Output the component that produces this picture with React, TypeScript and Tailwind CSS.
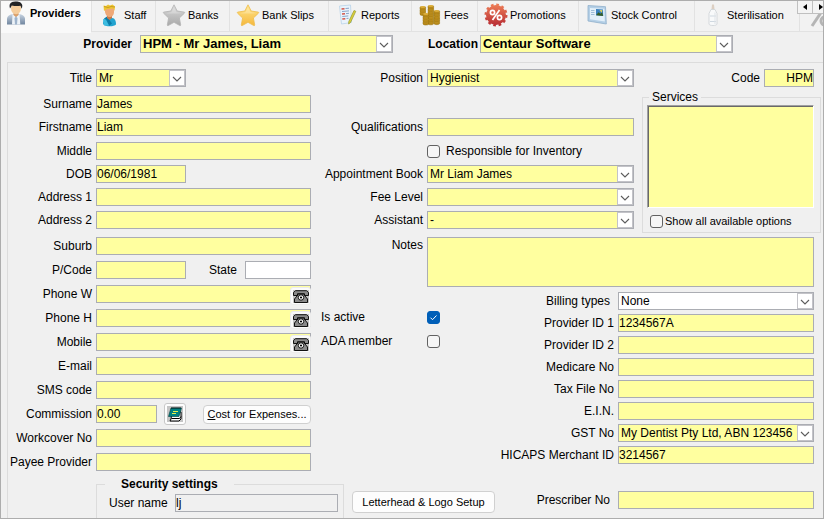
import React, { useState } from 'react';

const FIELD = 'block h-[18px] min-w-0 rounded-none border border-[#abadb3] px-0 text-xs text-black outline-none';
const YELLOW = 'bg-[#ffff9f]';

interface TextFieldProps {
  id: string;
  label: string;
  labelClass: string;
  value?: string;
  inputClass?: string;
  children?: React.ReactNode;
}

const TextField: React.FC<TextFieldProps> = ({ id, label, labelClass, value = '', inputClass = 'flex-1', children }) => (
  <div className="relative flex h-[18px] items-center gap-1">
    <label htmlFor={id} className={`shrink-0 whitespace-nowrap text-right ${labelClass}`}>{label}</label>
    <input id={id} type="text" defaultValue={value} className={`${FIELD} ${YELLOW} ${inputClass}`} />
    {children}
  </div>
);

interface ComboProps {
  id: string;
  options: string[];
  className?: string;
  selectClass?: string;
}

const Combo: React.FC<ComboProps> = ({ id, options, className = 'flex-1', selectClass = 'bg-[#ffff9f] text-xs' }) => (
  <div className={`relative h-[18px] min-w-0 ${className}`}>
    <select
      id={id}
      className={`block h-[18px] w-full appearance-none rounded-none border border-[#abadb3] pl-0.5 pr-4 leading-4 text-black outline-none ${selectClass}`}
    >
      {options.map((o) => <option key={o}>{o}</option>)}
    </select>
    <span className="pointer-events-none absolute right-px top-px flex h-4 w-4 items-center justify-center border border-[#c3c3c8] bg-white pt-0.5">
      <svg width="10" height="6" viewBox="0 0 10 6" fill="none" stroke="#5c5c5c" strokeWidth="1.1">
        <path d="M1 1l4 4 4-4" />
      </svg>
    </span>
  </div>
);

interface ComboFieldProps extends ComboProps {
  label: string;
  labelClass: string;
}

const ComboField: React.FC<ComboFieldProps> = ({ label, labelClass, ...combo }) => (
  <div className="flex h-[18px] items-center gap-1">
    <label htmlFor={combo.id} className={`shrink-0 whitespace-nowrap text-right ${labelClass}`}>{label}</label>
    <Combo {...combo} />
  </div>
);

const Tick: React.FC<{ id: string; checked?: boolean }> = ({ id, checked = false }) => (
  <span className="relative h-[13px] w-[13px] shrink-0">
    <input
      id={id}
      type="checkbox"
      defaultChecked={checked}
      className="peer block h-[13px] w-[13px] appearance-none rounded-[3px] border border-[#626262] bg-[#f6f6f6] checked:border-[#005fb8] checked:bg-[#005fb8]"
    />
    <svg viewBox="0 0 13 13" className="pointer-events-none absolute inset-0 hidden peer-checked:block" fill="none" stroke="#fff">
      <path d="M3.5 6.7l2 2 4-4.2" />
    </svg>
  </span>
);

const PhoneButton: React.FC<{ label: string }> = ({ label }) => (
  <button
    type="button"
    aria-label={label}
    className="absolute right-0 top-0.5 flex h-[18px] w-[21px] items-center justify-center rounded-[3px] border border-[#ececec] bg-[#fbfbfb]"
  >
    <svg width="16" height="13" viewBox="0 0 16 13">
      <rect width="16" height="13" fill="#c4c4c4" />
      <path d="M4.500 4h7l.5 2 2.500 3v3.500h-13V9L4 6z" fill="#8a8a8a" stroke="#000" strokeWidth=".9" />
      <path d="M.5 5.500v-3L2.500.700h11l2 1.800v3h-4V3.700h-7v1.800z" fill="#8a8a8a" stroke="#000" strokeWidth=".9" />
      <circle cx="8" cy="7.500" r="2.700" fill="#fff" stroke="#000" strokeWidth=".9" />
      <circle cx="8" cy="7.500" r="1.100" fill="#000" />
    </svg>
  </button>
);

const PersonIcon = () => (
  <svg width="20" height="24" viewBox="0 0 20 24">
    <defs>
      <linearGradient id="coat" x1="0" x2="0" y1="0" y2="1">
        <stop offset="0" stopColor="#c8d4e2" />
        <stop offset="1" stopColor="#71869f" />
      </linearGradient>
    </defs>
    <path d="M1 23.500V18c0-3 3-4.500 6-5h6c3 .5 6 2 6 5v5.500z" fill="url(#coat)" />
    <path d="M6.500 13L10 16l3.500-3 .8 10.500H6z" fill="#eef3f8" />
    <path d="M10 15.500l1.500 1.500-.5 6.500H9L8.500 17z" fill="#9fb4cc" />
    <path d="M7.500 10h5v4L10 16l-2.500-2z" fill="#dda069" />
    <ellipse cx="10" cy="7.500" rx="5" ry="5.800" fill="#f5cd9c" />
    <path d="M4 7.500C2.500 3 5 .8 8 .8c1.500-.8 8-.8 8.300 3.700.1 1.200-.3 2.300-.6 3.200-.6-1-.7-2-1.200-3-2.500.5-5.500.6-8.700-.2-.7 1-.9 2-1.800 3z" fill="#222326" />
  </svg>
);

const StaffIcon = () => (
  <svg width="15" height="23" viewBox="0 0 15 23">
    <path d="M1 20c0-4 2-6 5-6h4c3 0 4 3 4 6.500C12 23 3 23 1 20z" fill="#22a3cf" />
    <path d="M2 14.500l3-2 5 7-3 2.500z" fill="#0c7daa" />
    <path d="M1 15l3 .5 3 6H2z" fill="#3dbce0" />
    <path d="M5 10h5v4l-2.500 2L5 14z" fill="#c9794a" />
    <path d="M3 4h9v4c0 2.500-1.500 5-4.300 5S3.500 10.500 3 8z" fill="#efa877" />
    <path d="M2 7L1.500 1.500 4 2l2-1.500L8 1.500 10.500.5 13 2.500 12.500 7l-1-2.500L5 5z" fill="#eec531" />
    <path d="M2 2.500l4 1 3-1 4 .5" stroke="#b88d15" fill="none" strokeWidth=".7" />
  </svg>
);

const StarIcon: React.FC<{ from: string; to: string; edge: string; id: string }> = ({ from, to, edge, id }) => (
  <svg width="24" height="24" viewBox="0 0 24 24" className="shrink-0">
    <defs>
      <linearGradient id={id} x1="0" x2="0" y1="0" y2="1">
        <stop offset="0" stopColor={from} />
        <stop offset="1" stopColor={to} />
      </linearGradient>
    </defs>
    <path
      d="M12 1.800l3.200 6.200 7 1.100c.6.100.6.700.2 1.100l-5 4.800 1.300 6.900c.1.600-.4.900-.9.700L12 19.300l-5.800 3.300c-.5.200-1-.1-.9-.7L6.600 15l-5-4.800c-.4-.4-.4-1 .2-1.100l7-1.100z"
      fill={`url(#${id})`}
      stroke={edge}
      strokeWidth=".8"
      strokeLinejoin="round"
    />
    <path d="M12 4l2.500 5 5.500 1c-3 .5-11 1-16 .2L9.500 9z" fill="#fff" opacity=".25" />
  </svg>
);

const ReportIcon = () => (
  <svg width="20" height="22" viewBox="0 0 20 22">
    <path d="M2.500 2l11-1 1 17.500-10 1.500z" fill="#eaf3fb" stroke="#b9d3e9" strokeWidth=".8" />
    <path d="M4.500 5l3-.3M5 10l3-.3M5.300 15l3-.3" stroke="#d4574a" strokeWidth="1.600" />
    <path d="M8.500 4.500l3.500-.3M5 7.500l7-.6M9 9.600l3-.3M5.300 12.500l6-.6M9.500 14.500l2-.2" stroke="#8aa5c9" strokeWidth="1" />
    <path d="M17 6.500l1.800.8-5.300 11.200-1.900 1.500.2-2.500z" fill="#dfcf38" stroke="#8f9a34" strokeWidth=".7" />
  </svg>
);

const COIN_STACKS = [
  { x: 1, y: 3, n: 3 },
  { x: 9, y: 2, n: 7 },
  { x: 15, y: 7, n: 5 },
  { x: 4, y: 10, n: 4 },
];

const CoinsIcon = () => (
  <svg width="22" height="22" viewBox="0 0 22 22">
    {COIN_STACKS.map((s) =>
      Array.from({ length: s.n }, (_, i) => s.n - 1 - i).map((i) => (
        <g key={`${s.x}-${i}`}>
          <path
            d={`M${s.x} ${s.y + i * 2.600}v2.200c0 1.400 5.600 1.400 5.600 0v-2.200z`}
            fill="#b98a1a"
            stroke="#94700f"
            strokeWidth=".5"
          />
          <ellipse cx={s.x + 2.800} cy={s.y + i * 2.600} rx="2.800" ry="1.100" fill="#dcae3a" />
        </g>
      ))
    )}
  </svg>
);

const PromoIcon = () => (
  <svg width="24" height="24" viewBox="0 0 24 24" className="shrink-0">
    <defs>
      <linearGradient id="promo" x1="0" x2="0" y1="0" y2="1">
        <stop offset="0" stopColor="#eb7a55" />
        <stop offset="1" stopColor="#b92f35" />
      </linearGradient>
    </defs>
    <circle cx="12" cy="12" r="10" fill="url(#promo)" />
    <circle cx="12" cy="12" r="10" fill="none" stroke="url(#promo)" strokeWidth="3" strokeDasharray="2.600 2.630" />
    <g fill="none" stroke="#fff" strokeWidth="1.700">
      <circle cx="8.500" cy="9.500" r="2.100" />
      <circle cx="15.500" cy="14.500" r="2.100" />
      <path d="M15.500 7l-7 10" />
    </g>
  </svg>
);

const StockIcon = () => (
  <svg width="20" height="22" viewBox="0 0 20 22">
    <path d="M1 1.500l17.500 1.200.8 17.300L1 17z" fill="#b4cfe6" stroke="#91b0cc" strokeWidth=".8" />
    <path d="M3 4l14.300.8.500 12.800L3 15.200z" fill="#e3f0fa" />
    <path d="M9 5l7 .5.200 6.500L9 11.300z" fill="#3c81bd" />
    <path d="M9 11.300l2.500-3 2 1.500 1.500-1.500 1.200 3.700z" fill="#365e27" />
    <path d="M12.500 6l3 .2-1 2.500z" fill="#e9d657" />
    <path d="M4 6.500h3.500M4 8.500h3.500M4 10.500h3.500" stroke="#9fbdd8" />
  </svg>
);

const BottleIcon = () => (
  <svg width="10" height="24" viewBox="0 0 10 24">
    <path d="M4 1.500h2l.5 5h-3z" fill="#dccfc2" />
    <path d="M3 6.500h4l2 4V21c0 2-8 2-8 0V10.500z" fill="#f8f9fa" stroke="#cdd2d6" strokeWidth=".8" />
    <path d="M2 13h6M2 18.500h6" stroke="#cfd8e0" />
    <path d="M7 9.500V21" stroke="#dfe3e7" />
  </svg>
);

const TABS = [
  { name: 'Staff', width: 'w-16', icon: <StaffIcon /> },
  { name: 'Banks', width: 'w-[74px]', icon: <StarIcon id="silver" from="#dadada" to="#a9a9a9" edge="#b4b4b4" /> },
  { name: 'Bank Slips', width: 'w-[99px]', icon: <StarIcon id="gold" from="#ffe58a" to="#f5b83d" edge="#eebc4d" /> },
  { name: 'Reports', width: 'w-[83px]', icon: <ReportIcon /> },
  { name: 'Fees', width: 'w-[66px]', icon: <CoinsIcon /> },
  { name: 'Promotions', width: 'w-[101px]', icon: <PromoIcon /> },
  { name: 'Stock Control', width: 'w-[116px]', icon: <StockIcon /> },
  { name: 'Sterilisation', width: 'w-[105px]', icon: <BottleIcon /> },
];

const TabBar: React.FC = () => {
  const [active, setActive] = useState('Providers');
  return (
    <div className="relative flex h-8 overflow-hidden text-[11px]" role="tablist">
      <button
        type="button"
        role="tab"
        aria-selected={active === 'Providers'}
        onClick={() => setActive('Providers')}
        className="flex w-[90px] shrink-0 items-center gap-1 bg-[#f9f9f9] pb-2 pl-[5px] font-bold"
      >
        <PersonIcon />
        Providers
      </button>
      {TABS.map((t) => (
        <button
          key={t.name}
          type="button"
          role="tab"
          aria-selected={active === t.name}
          onClick={() => setActive(t.name)}
          className={`flex h-[31px] shrink-0 items-center whitespace-nowrap border-b border-l border-[#e2e2e2] bg-[#f2f2f2] pb-0.5 pl-1.5 ${t.width}`}
        >
          <span className="flex w-[26px] justify-center pr-[3px]">{t.icon}</span>
          {t.name}
        </button>
      ))}
      <button type="button" role="tab" aria-label="More" className="flex h-[31px] min-w-0 flex-1 items-end overflow-hidden border-b border-l border-[#e2e2e2] bg-[#f2f2f2] pb-1 pl-2.5">
        <svg width="20" height="18" viewBox="0 0 20 18" className="shrink-0" fill="none" stroke="#b5b5b5" strokeWidth="3">
          <path d="M2 17L12 2" />
          <circle cx="15" cy="12" r="4" />
        </svg>
      </button>
      <div className="absolute right-0 top-0 flex h-[13px] w-[26px] overflow-hidden">
        <button type="button" aria-label="Scroll left" className="flex w-4 shrink-0 items-center justify-center border border-t-0 border-[#c0c0c0] bg-[#f4f4f4]">
          <svg width="4" height="6" viewBox="0 0 4 6"><path d="M4 0v6L0 3z" /></svg>
        </button>
        <button type="button" aria-label="Scroll right" className="flex w-4 shrink-0 items-center border-b border-[#c0c0c0] bg-[#f4f4f4] pl-1.5">
          <svg width="4" height="6" viewBox="0 0 4 6"><path d="M0 0v6l4-3z" /></svg>
        </button>
      </div>
    </div>
  );
};

const PersonalDetails: React.FC = () => {
  const label = 'w-[84px]';
  return (
    <section className="flex w-[303px] shrink-0 flex-col">
      <ComboField id="title" label="Title" labelClass={label} options={['Mr', 'Mrs', 'Ms', 'Dr']} className="w-[90px]" />
      <div className="mt-2 flex flex-col gap-[5px]">
        <TextField id="surname" label="Surname" labelClass={label} value="James" />
        <TextField id="firstname" label="Firstname" labelClass={label} value="Liam" />
      </div>
      <div className="mt-1.5 flex flex-col gap-[5px]">
        <TextField id="middle" label="Middle" labelClass={label} />
        <TextField id="dob" label="DOB" labelClass={label} value="06/06/1981" inputClass="w-[90px]" />
        <TextField id="address1" label="Address 1" labelClass={label} />
        <TextField id="address2" label="Address 2" labelClass={label} />
      </div>
      <div className="mt-2 flex flex-col gap-1.5">
        <TextField id="suburb" label="Suburb" labelClass={label} />
        <TextField id="pcode" label="P/Code" labelClass={label} inputClass="w-[90px]">
          <label htmlFor="state" className="ml-auto pr-1">State</label>
          <input id="state" type="text" className={`${FIELD} w-[66px] bg-white`} />
        </TextField>
        <TextField id="phonew" label="Phone W" labelClass={label}><PhoneButton label="Dial work" /></TextField>
        <TextField id="phoneh" label="Phone H" labelClass={label}><PhoneButton label="Dial home" /></TextField>
        <TextField id="mobile" label="Mobile" labelClass={label}><PhoneButton label="Dial mobile" /></TextField>
        <TextField id="email" label="E-mail" labelClass={label} />
        <TextField id="sms" label="SMS code" labelClass={label} />
        <TextField id="commission" label="Commission" labelClass={label} value="0.00" inputClass="w-[61px]">
          <button type="button" aria-label="Commission notes" className="ml-[3px] flex h-[22px] w-[22px] shrink-0 items-center justify-center rounded-[3px] border border-[#c8c8c8] bg-[#fdfdfd]">
            <svg width="16" height="16" viewBox="0 0 16 16">
              <rect width="16" height="16" fill="#c4c4c4" />
              <path d="M5 6h9v7l-2 2H3l1-2z" fill="#fff" stroke="#000" />
              <path d="M4.500 12.500h8l1.500-2" fill="none" stroke="#000" />
              <path d="M4 2h10.500l-2.500 8.500H1.500z" fill="#008080" stroke="#003c3c" strokeWidth=".6" />
              <path d="M5 1v2M7 1v2M9 1v2M11 1v2M13 1v2" stroke="#000" strokeWidth=".7" />
              <path d="M6 5.500h5M5 7.500h4" stroke="#e5f04c" />
            </svg>
          </button>
          <button type="button" className="ml-auto h-[19px] w-[108px] whitespace-nowrap rounded-[4px] border border-[#d0d0d0] bg-[#fdfdfd] text-[11px] leading-4">
            <span className="underline">C</span>ost for Expenses...
          </button>
        </TextField>
        <TextField id="workcover" label="Workcover No" labelClass={label} />
        <TextField id="payee" label="Payee Provider" labelClass={label} />
      </div>
    </section>
  );
};

const Services: React.FC = () => (
  <section className="flex w-[187px] shrink-0 flex-col pl-2">
    <div className="mr-[7px] flex items-center justify-end gap-1">
      <label htmlFor="code">Code</label>
      <input id="code" type="text" defaultValue="HPM" className={`${FIELD} ${YELLOW} w-[50px] text-right`} />
    </div>
    <fieldset className="mt-1 flex h-[142px] min-w-0 flex-col border border-[#dcdcdc] pl-1 pr-1.5">
      <legend className="ml-0.5 px-[3px] leading-3">Services</legend>
      <div className="mt-0.5 h-[103px] shrink-0 border border-[#a0a0a0] border-b-white border-r-white">
        <div className={`h-full border-l border-t border-[#696969] ${YELLOW}`} />
      </div>
      <div className="mt-[5px] flex items-center gap-0.5 pl-[3px] text-[11px]">
        <Tick id="showall" />
        <label htmlFor="showall" className="whitespace-nowrap leading-4">Show all available options</label>
      </div>
    </fieldset>
  </section>
);

const PracticeDetails: React.FC = () => {
  const label = 'w-[112px]';
  const idLabel = 'w-[170px]';
  return (
    <section className="flex min-w-0 flex-1 flex-col">
      <div className="flex pr-0.5">
        <div className="flex min-w-0 flex-1 flex-col">
          <ComboField id="position" label="Position" labelClass={label} options={['Hygienist', 'Dentist']} />
          <div className="mt-[31px] flex flex-col">
            <TextField id="qualifications" label="Qualifications" labelClass={label} />
          </div>
          <div className="mt-1.5 flex flex-col gap-[5px]">
            <div className="flex h-[18px] items-center gap-1.5 pl-[116px]">
              <Tick id="inventory" />
              <label htmlFor="inventory" className="whitespace-nowrap">Responsible for Inventory</label>
            </div>
            <ComboField id="book" label="Appointment Book" labelClass={label} options={['Mr Liam James']} />
            <ComboField id="feelevel" label="Fee Level" labelClass={label} options={['']} />
            <ComboField id="assistant" label="Assistant" labelClass={label} options={['-']} />
          </div>
        </div>
        <Services />
      </div>
      <div className="mt-1 flex flex-col pr-[9px]">
        <div className="flex gap-1">
          <label htmlFor="notes" className={`shrink-0 text-right ${label}`}>Notes</label>
          <textarea id="notes" className={`block h-[50px] min-w-0 flex-1 resize-none border border-[#abadb3] outline-none ${YELLOW}`} />
        </div>
        <div className="mt-[5px] flex">
          <div className="mt-4 flex w-[133px] shrink-0 flex-col gap-1.5 pl-2.5">
            <div className="flex h-[18px] items-center">
              <label htmlFor="active" className="w-[106px]">Is active</label>
              <Tick id="active" checked />
            </div>
            <div className="flex h-[18px] items-center">
              <label htmlFor="ada" className="w-[106px]">ADA member</label>
              <Tick id="ada" />
            </div>
          </div>
          <div className="flex min-w-0 flex-1 flex-col gap-1">
            <ComboField id="billing" label="Billing types" labelClass={`${idLabel} pr-1`} options={['None']} selectClass="bg-white text-xs" />
            <TextField id="pid1" label="Provider ID 1" labelClass={idLabel} value="1234567A" />
            <TextField id="pid2" label="Provider ID 2" labelClass={idLabel} />
            <TextField id="medicare" label="Medicare No" labelClass={idLabel} />
            <TextField id="taxfile" label="Tax File No" labelClass={idLabel} />
            <TextField id="ein" label="E.I.N." labelClass={idLabel} />
            <ComboField id="gst" label="GST No" labelClass={idLabel} options={['My Dentist Pty Ltd, ABN 123456']} />
            <TextField id="hicaps" label="HICAPS Merchant ID" labelClass={idLabel} value="3214567" />
          </div>
        </div>
      </div>
    </section>
  );
};

const App: React.FC = () => (
  <main className="flex min-h-screen flex-col border border-[#adadad] bg-[#f0f0f0] font-['Liberation_Sans',Arial,sans-serif] text-xs text-black">
    <TabBar />
    <div className="flex h-[29px] items-start pt-0.5 font-bold">
      <label htmlFor="provider" className="w-[131px] shrink-0 text-right leading-[18px]">Provider</label>
      <Combo id="provider" options={['HPM - Mr James, Liam']} className="ml-2 w-[253px]" selectClass="bg-[#ffff9f] text-[13px] font-bold" />
      <label htmlFor="location" className="ml-[35px] leading-[18px]">Location</label>
      <Combo id="location" options={['Centaur Software']} className="ml-0.5 w-[253px]" selectClass="bg-[#ffff9f] text-[13px] font-bold" />
    </div>
    <div className="ml-1.5 flex flex-1 flex-col border-l border-t border-[#dcdcdc]">
      <div className="flex pt-1.5">
        <PersonalDetails />
        <PracticeDetails />
      </div>
      <div className="mt-1.5 flex flex-1 items-start pl-[88px] pr-[9px]">
        <fieldset className="flex w-[248px] min-w-0 shrink-0 self-stretch border border-b-0 border-[#dcdcdc]">
          <legend className="ml-2 px-4 font-bold leading-[14px]">Security settings</legend>
          <div className="flex items-start gap-1 pl-3 pt-[3px]">
            <label htmlFor="username" className="w-[62px] whitespace-nowrap leading-[18px]">User name</label>
            <input id="username" type="text" defaultValue="lj" className={`${FIELD} w-[163px] bg-[#f0f0f0]`} />
          </div>
        </fieldset>
        <button type="button" className="ml-2 mt-3.5 h-[22px] w-[143px] shrink-0 whitespace-nowrap rounded-[4px] border border-[#d0d0d0] bg-[#fdfdfd] text-[11px]">
          Letterhead &amp; Logo Setup
        </button>
        <div className="mt-3.5 min-w-0 flex-1">
          <TextField id="prescriber" label="Prescriber No" labelClass="w-[119px] pr-1" />
        </div>
      </div>
    </div>
  </main>
);

export default App;
